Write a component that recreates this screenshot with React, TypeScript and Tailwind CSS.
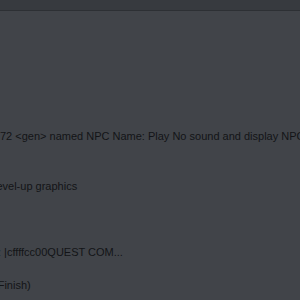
// Trigger text pane, scrolled sideways so each line starts part-way through.
const lines: { text: string; gap: string; shift: string }[] = [
  { text: "72 <gen> named NPC Name: Play No sound and display NPC Text.", gap: "mt-0", shift: "ml-0" },
  { text: "level-up graphics", gap: "mt-[34px]", shift: "-ml-[6px]" },
  { text: ": |cffffcc00QUEST COM...", gap: "mt-[50px]", shift: "-ml-[2px]" },
  { text: "(Finish)", gap: "mt-[17px]", shift: "-ml-[6px]" },
];

export default function App() {
  return (
    <div
      className="h-[300px] w-[300px] overflow-hidden bg-[#414449] text-[11px] text-[#131417]"
      style={{ fontFamily: '"Liberation Sans", Arial, sans-serif' }}
    >
      <div className="h-[10px] bg-[#373a3f]" />
      <div className="h-px bg-[#2d3034]" />
      <div className="flex flex-col pt-[117px]">
        {lines.map((line) => (
          <div key={line.text} className={`${line.gap} overflow-hidden whitespace-nowrap leading-[16px]`}>
            <span className={`${line.shift} inline-block`}>{line.text}</span>
          </div>
        ))}
      </div>
    </div>
  );
}
